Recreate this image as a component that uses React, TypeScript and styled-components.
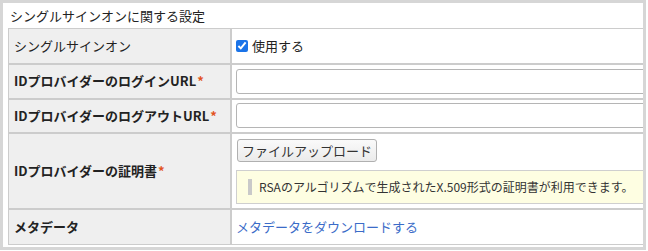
import React from "react";
import styled, { createGlobalStyle } from "styled-components";

const GlobalStyle = createGlobalStyle`
  html, body { margin: 0; padding: 0; background: #ffffff; }
  body {
    font-family: "Noto Sans CJK JP", "Noto Sans", sans-serif;
    font-size: 13px;
    color: #333333;
  }
`;

const Panel = styled.section`
  box-sizing: border-box;
  width: 646px;
  border: 3px solid #d6d6d6;
  padding: 0 5px 2px 5px;
  overflow: hidden;
`;

const Title = styled.h2`
  margin: 0;
  padding: 3px 2px 3px;
  font-size: 13px;
  font-weight: normal;
  line-height: 19px;
  color: #222222;
  white-space: nowrap;
`;

const Table = styled.table`
  width: 760px;
  border-collapse: separate;
  border-spacing: 0;
  table-layout: fixed;
`;

const HeadCell = styled.th<{ $bold?: boolean }>`
  box-sizing: border-box;
  width: 223px;
  border: 1px solid #cccccc;
  background: #efefef;
  padding: 4px 5px;
  text-align: left;
  vertical-align: middle;
  font-size: 13px;
  font-weight: ${(p) => (p.$bold ? "bold" : "normal")};
  color: #222222;
  line-height: 20px;
  white-space: nowrap;
`;

const ValueCell = styled.td<{ $pt?: number; $pb?: number }>`
  border: 1px solid #cccccc;
  padding: ${(p) => p.$pt ?? 4}px 4px ${(p) => p.$pb ?? 4}px 4px;
  vertical-align: middle;
  background: #ffffff;
  line-height: 25px;
  white-space: nowrap;
`;

const Required = styled.span`
  color: #e2541e;
  font-weight: bold;
  margin-left: 1px;
`;

const CheckLabel = styled.label`
  display: inline-flex;
  align-items: center;
  gap: 4px;
  font-size: 13px;
  color: #222222;
  height: 25px;
`;

const Check = styled.input`
  margin: 0;
  width: 12px;
  height: 12px;
  accent-color: #1a73e8;
`;

const TextField = styled.input`
  box-sizing: border-box;
  display: block;
  width: 500px;
  height: 25px;
  margin: 0;
  border: 1px solid #b5b5b5;
  border-radius: 3px;
  background: #ffffff;
  font-family: inherit;
  font-size: 13px;
`;

const UploadButton = styled.button`
  box-sizing: border-box;
  display: block;
  height: 23px;
  margin: 0 0 0 1px;
  padding: 0 4px;
  border: 1px solid #b0b0b0;
  border-radius: 3px;
  background: linear-gradient(#fafafa, #ebebeb);
  font-family: inherit;
  font-size: 13px;
  line-height: 21px;
  color: #333333;
`;

const Notice = styled.div`
  box-sizing: border-box;
  display: flex;
  align-items: center;
  gap: 7px;
  width: 500px;
  height: 34px;
  margin-top: 8px;
  padding-left: 11px;
  border: 1px solid #cfcfcf;
  background: #fefee2;
  font-size: 12px;
  color: #333333;
`;

const NoticeBar = styled.span`
  display: block;
  width: 4px;
  height: 16px;
  background: #c9c9c9;
`;

const Link = styled.a`
  color: #3b6cc8;
  text-decoration: none;
  font-size: 13px;
  line-height: 26px;
`;

export default function App() {
  return (
    <>
      <GlobalStyle />
      <Panel>
        <Title>シングルサインオンに関する設定</Title>
        <Table>
          <tbody>
            <tr>
              <HeadCell>シングルサインオン</HeadCell>
              <ValueCell>
                <CheckLabel>
                  <Check type="checkbox" defaultChecked />
                  使用する
                </CheckLabel>
              </ValueCell>
            </tr>
            <tr>
              <HeadCell $bold>
                IDプロバイダーのログインURL<Required>*</Required>
              </HeadCell>
              <ValueCell>
                <TextField type="text" />
              </ValueCell>
            </tr>
            <tr>
              <HeadCell $bold>
                IDプロバイダーのログアウトURL<Required>*</Required>
              </HeadCell>
              <ValueCell $pt={3} $pb={4}>
                <TextField type="text" />
              </ValueCell>
            </tr>
            <tr>
              <HeadCell $bold>
                IDプロバイダーの証明書<Required>*</Required>
              </HeadCell>
              <ValueCell $pt={5} $pb={4}>
                <UploadButton type="button">ファイルアップロード</UploadButton>
                <Notice>
                  <NoticeBar />
                  RSAのアルゴリズムで生成されたX.509形式の証明書が利用できます。
                </Notice>
              </ValueCell>
            </tr>
            <tr>
              <HeadCell $bold>メタデータ</HeadCell>
              <ValueCell>
                <Link href="#">メタデータをダウンロードする</Link>
              </ValueCell>
            </tr>
          </tbody>
        </Table>
      </Panel>
    </>
  );
}
